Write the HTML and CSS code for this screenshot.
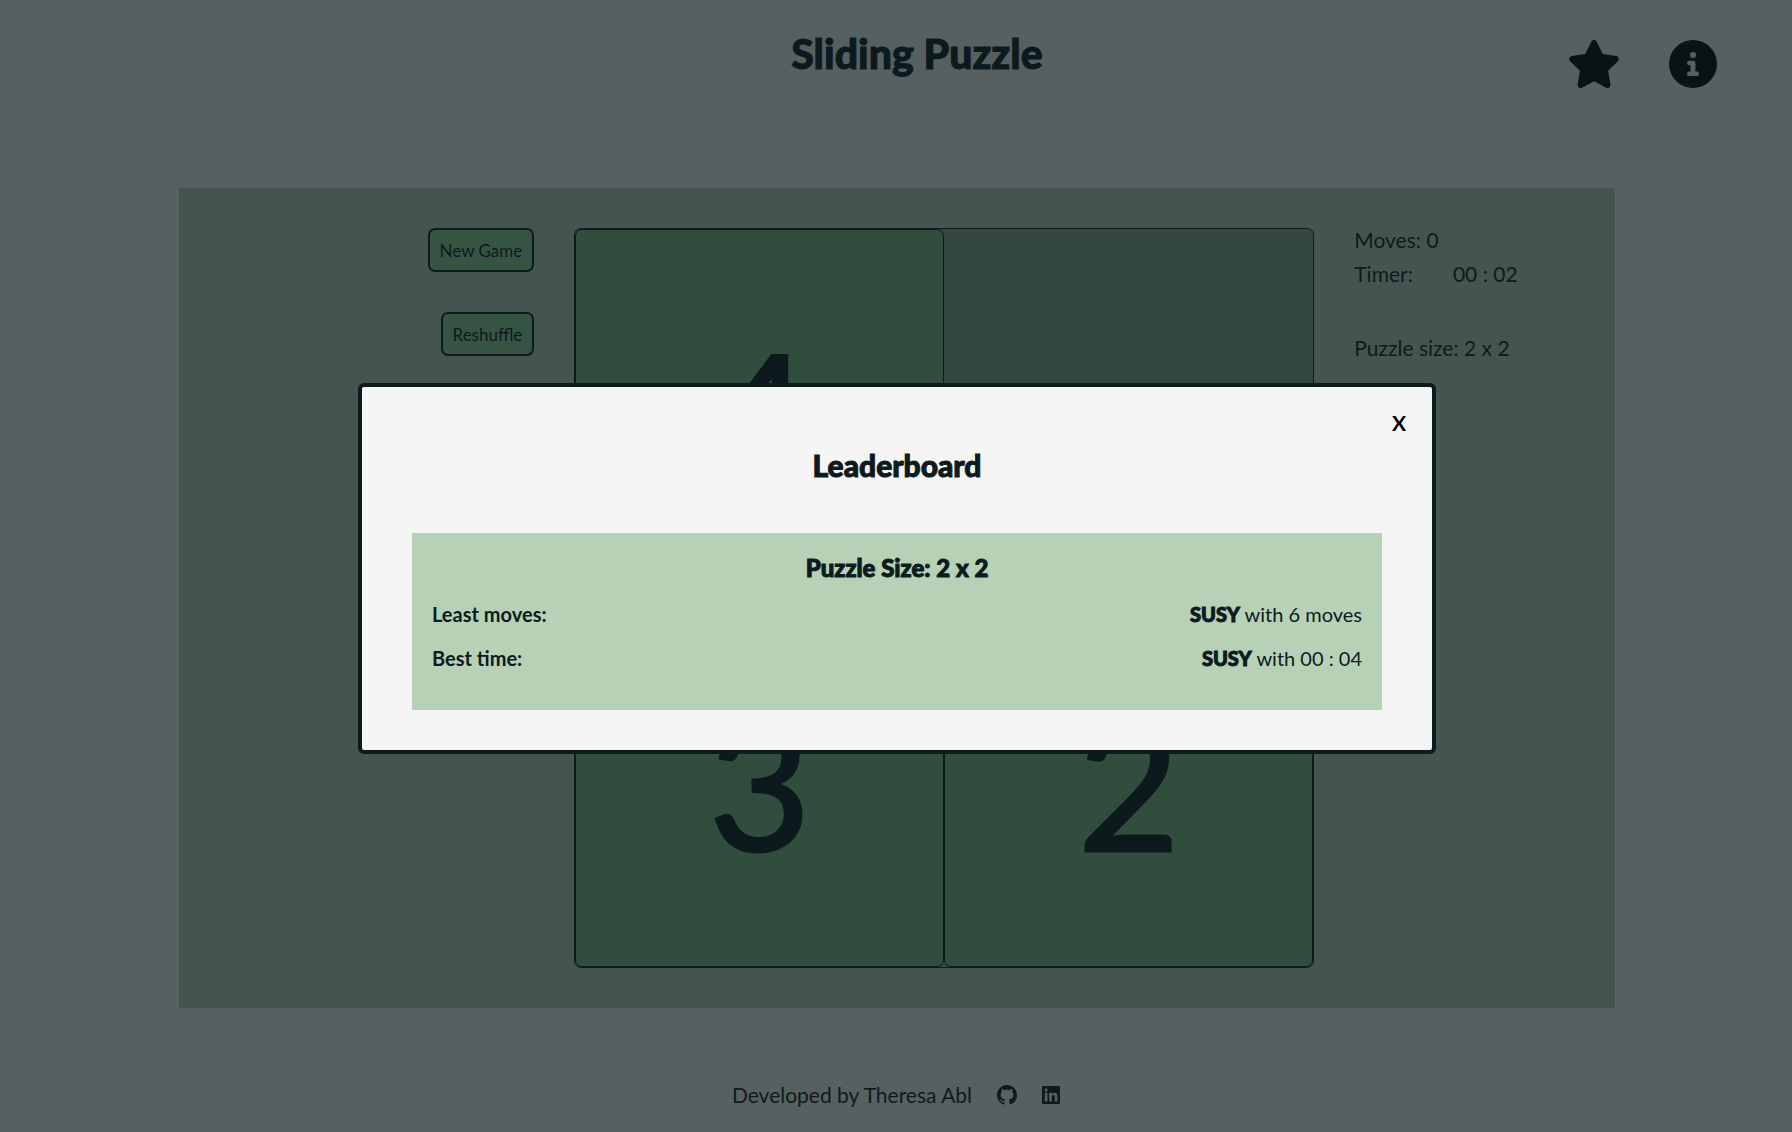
FILE: index.html
```html
<!DOCTYPE html>
<html lang="en">
<head>
  <meta charset="utf-8">
  <meta name="viewport" content="width=device-width, initial-scale=1">
  <title>Sliding Puzzle</title>
  <link rel="stylesheet" href="styles.css">
</head>
<body>
  <header class="header">
    <h1 class="title">Sliding Puzzle</h1>
    <nav class="header-actions">
      <button class="icon-button" type="button" aria-label="Leaderboard">
        <svg class="icon-star" viewBox="0 0 576 512" aria-hidden="true"><path d="M316.9 18C311.600 7 300.400 0 288.100 0s-23.400 7-28.800 18L195 150.300 51.400 171.500c-12 1.800-22 10.200-25.700 21.700s-.7 24.200 7.900 32.700L137.800 329 113.200 474.700c-2 12 3 24.200 12.900 31.300s23 8 33.800 2.300l128.300-68.500 128.300 68.500c10.800 5.700 23.900 4.900 33.800-2.300s14.900-19.300 12.900-31.300L438.500 329 542.700 225.900c8.600-8.500 11.700-21.200 7.900-32.700s-13.700-19.900-25.700-21.700L381.200 150.300 316.900 18z"/></svg>
      </button>
      <button class="icon-button" type="button" aria-label="Information">
        <svg class="icon-info" viewBox="0 0 512 512" aria-hidden="true"><path fill-rule="evenodd" d="M256 0a256 256 0 1 1 0 512a256 256 0 1 1 0-512zM256 128a32 32 0 1 0 0 64a32 32 0 1 0 0-64zM216 220a24 24 0 0 0 0 48h14v68h-14a24 24 0 0 0 0 48h80a24 24 0 0 0 0-48h-14v-92a24 24 0 0 0-24-24z"/></svg>
      </button>
    </nav>
  </header>

  <main class="game">
    <div class="controls">
      <button class="game-button" type="button">New Game</button>
      <button class="game-button" type="button">Reshuffle</button>
    </div>
    <div class="board">
      <div class="tile">4</div>
      <div class="gap"></div>
      <div class="tile">3</div>
      <div class="tile">2</div>
    </div>
    <div class="stats">
      <p class="stat">Moves: 0</p>
      <p class="stat stat-timer"><span>Timer:</span><span>00 : 02</span></p>
      <p class="stat stat-size">Puzzle size: 2 x 2</p>
    </div>
  </main>

  <footer class="footer">
    <span>Developed by Theresa Abl</span>
    <a class="social" href="#github" aria-label="GitHub">
      <svg viewBox="0 0 16 16" aria-hidden="true"><path d="M8 0C3.580 0 0 3.580 0 8c0 3.540 2.290 6.530 5.470 7.590.4.070.55-.17.55-.38 0-.19-.01-.82-.01-1.490-2.010.37-2.530-.49-2.690-.94-.09-.23-.48-.94-.82-1.130-.28-.15-.68-.52-.01-.53.63-.01 1.080.58 1.230.82.72 1.210 1.870.87 2.330.66.07-.52.28-.87.51-1.070-1.780-.2-3.640-.89-3.640-3.950 0-.87.31-1.590.82-2.150-.08-.2-.36-1.020.08-2.120 0 0 .67-.21 2.200.82.64-.18 1.320-.27 2-.27s1.360.09 2 .27c1.530-1.040 2.200-.82 2.200-.82.44 1.100.16 1.920.08 2.120.51.56.82 1.270.82 2.150 0 3.070-1.870 3.750-3.650 3.950.29.25.54.73.54 1.480 0 1.070-.01 1.930-.01 2.200 0 .21.15.46.55.38A8.010 8.010 0 0 0 16 8c0-4.420-3.580-8-8-8z"/></svg>
    </a>
    <a class="social" href="#linkedin" aria-label="LinkedIn">
      <svg class="icon-linkedin" viewBox="0 32 448 448" aria-hidden="true"><path d="M416 32H31.900C14.300 32 0 46.500 0 64.300v383.400C0 465.500 14.300 480 31.900 480H416c17.600 0 32-14.500 32-32.300V64.300c0-17.800-14.400-32.300-32-32.300zM135.400 416H69V202.200h66.500V416zm-33.200-243c-21.300 0-38.500-17.300-38.500-38.500S80.900 96 102.200 96c21.200 0 38.500 17.300 38.500 38.500 0 21.300-17.200 38.500-38.500 38.500zm282.100 243h-66.400V312c0-24.800-.5-56.700-34.500-56.700-34.600 0-39.900 27-39.900 54.900V416h-66.400V202.200h63.700v29.200h.9c8.900-16.800 30.600-34.500 62.900-34.500 67.200 0 79.700 44.300 79.700 101.900V416z"/></svg>
    </a>
  </footer>

  <div class="overlay">
    <dialog class="modal" open aria-labelledby="modal-title">
      <button class="modal-close" type="button" aria-label="Close">X</button>
      <h2 class="modal-title" id="modal-title">Leaderboard</h2>
      <section class="scores">
        <h3 class="scores-title">Puzzle Size: 2 x 2</h3>
        <p class="score"><span class="score-label">Least moves:</span><span><b>SUSY</b> with 6 moves</span></p>
        <p class="score"><span class="score-label">Best time:</span><span><b>SUSY</b> with 00 : 04</span></p>
      </section>
    </dialog>
  </div>
</body>
</html>
```
FILE: styles.css
```css
:root {
  --ink: #0d1b1e;
  --paper: #f5f5f5;
  --mint: #b7d1b7;
  --green: #7eb77f;
}

* {
  box-sizing: border-box;
}

body {
  margin: 0;
  min-height: 100vh;
  display: flex;
  flex-direction: column;
  background: #f1f1ef;
  color: var(--ink);
  font: 21px/34px Lato, "Liberation Sans", sans-serif;
}

h1, h2, h3, p {
  margin: 0;
}

h1, h2, h3 {
  font-weight: 900;
  -webkit-text-stroke: 1px var(--ink);
}

button {
  font-family: inherit;
  cursor: pointer;
}

.header {
  display: grid;
  grid-template-columns: 1fr auto 1fr;
  align-items: start;
  padding: 30px 75px 0 117px;
  height: 188px;
}

.title {
  grid-column: 2;
  font-size: 41px;
  line-height: 48px;
}

.header-actions {
  display: flex;
  justify-content: flex-end;
  gap: 48px;
  padding-top: 10px;
}

.icon-button {
  display: flex;
  padding: 0;
  border: 0;
  background: none;
  color: #000;
}

svg {
  display: block;
  fill: currentColor;
}

.icon-star {
  width: 54px;
  height: 48px;
}

.icon-info {
  width: 48px;
  height: 48px;
}

.game {
  display: grid;
  grid-template-columns: 10fr 740px 7fr;
  gap: 40px;
  align-items: start;
  margin: 0 177px 0 179px;
  padding: 40px;
  background: var(--mint);
}

.controls {
  display: flex;
  flex-direction: column;
  align-items: flex-end;
  gap: 40px;
}

.game-button {
  height: 44px;
  padding: 0 10px;
  border: 2px solid var(--ink);
  border-radius: 7px;
  background: #8ad08f;
  color: var(--ink);
  font-size: 17px;
}

.board {
  display: grid;
  grid-template-columns: 1fr 1fr;
  aspect-ratio: 1;
  border: 1px solid var(--ink);
  border-radius: 7px;
  background: #88a68b;
}

.tile {
  display: flex;
  align-items: center;
  justify-content: center;
  border: 1px solid var(--ink);
  border-radius: 7px;
  background: var(--green);
  font-size: 176px;
  line-height: 200px;
  -webkit-text-stroke: 3px var(--ink);
}

.stats {
  margin-top: -5px;
}

.stat-timer {
  display: flex;
  gap: 40px;
}

.stat-size {
  margin-top: 40px;
}

.footer {
  display: flex;
  align-items: center;
  justify-content: center;
  gap: 25px;
  padding: 70px 0 20px;
}

.social {
  color: inherit;
}

.social svg {
  width: 20px;
  height: 20px;
}

.social .icon-linkedin {
  width: 18px;
  height: 18px;
}

.overlay {
  position: fixed;
  inset: 0;
  display: flex;
  align-items: center;
  padding: 4px 356px 0 358px;
  background: rgb(13 27 30 / 68%);
}

.modal {
  position: relative;
  flex: 1;
  margin: 0;
  padding: 60px 50px 40px;
  border: 4px solid var(--ink);
  border-radius: 6px;
  background: var(--paper);
  color: var(--ink);
}

.modal-close {
  position: absolute;
  top: 19px;
  right: 16px;
  padding: 4px 10px;
  border: 0;
  background: none;
  color: #000;
  font-size: 21px;
  font-weight: 700;
  line-height: 26px;
}

.modal-title {
  margin-bottom: 50px;
  font-size: 30px;
  line-height: 36px;
  text-align: center;
}

.scores {
  padding: 19px 20px 30px;
  background: var(--mint);
}

.scores-title {
  margin-bottom: 9px;
  font-size: 24px;
  line-height: 31px;
  text-align: center;
}

.score {
  display: flex;
  justify-content: space-between;
  font-size: 20px;
  line-height: 44px;
}

.score b {
  font-weight: 900;
  -webkit-text-stroke: 1px var(--ink);
}

.score-label {
  font-weight: 700;
}
```
